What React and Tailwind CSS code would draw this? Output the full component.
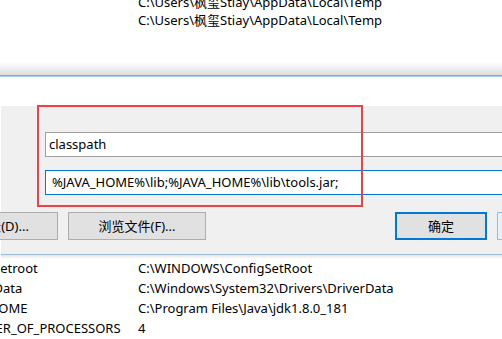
import React from 'react';

const tempPath = 'C:\\Users\\枫玺Stiay\\AppData\\Local\\Temp';

const envRows = [
  { name: 'configsetroot', value: 'C:\\WINDOWS\\ConfigSetRoot' },
  { name: 'DriverData', value: 'C:\\Windows\\System32\\Drivers\\DriverData' },
  { name: 'JAVA_HOME', value: 'C:\\Program Files\\Java\\jdk1.8.0_181' },
  { name: 'NUMBER_OF_PROCESSORS', value: '4' },
];

const App = () => {
  return (
    <div
      className="relative w-[502px] h-[339px] overflow-hidden bg-white text-[13px] text-black"
      style={{ fontFamily: '"Noto Sans", "Noto Sans CJK SC", sans-serif' }}
    >
      {/* list behind the dialog, top part */}
      <div className="flex h-[62px] flex-col overflow-hidden pl-[138px]">
        <div className="-mt-[7px] leading-[18px]">{tempPath}</div>
        <div className="leading-[18px]">{tempPath}</div>
      </div>

      {/* dialog shadow + border */}
      <div className="h-[13px] bg-gradient-to-b from-white to-[#dedede]" />
      <div className="h-px bg-[#6eaee6]" />
      <div className="h-px bg-[#a9d0f0]" />

      {/* dialog */}
      <div className="ml-px">
        <div className="h-[29px] bg-white" />
        <div className="bg-[#f0f0f0] pt-[26px] pb-[14px]">
          <div className="flex flex-col gap-[13px] pl-[44px]">
            <div className="h-[25px] w-[470px] border border-[#a0a0a0] bg-white pl-[3px] leading-[23px]">
              classpath
            </div>
            <div className="h-[25px] w-[470px] border border-[#0078d7] bg-white pl-[6px] leading-[23px]">
              %JAVA_HOME%\lib;%JAVA_HOME%\lib\tools.jar;
            </div>
          </div>

          <div className="mt-[17px] flex items-center whitespace-nowrap">
            <div className="-ml-[81px] h-[28px] w-[138px] shrink-0 border border-[#adadad] bg-[#e1e1e1] text-center leading-[26px]">
              浏览目录(D)...
            </div>
            <div className="ml-[10px] h-[28px] w-[138px] shrink-0 border border-[#adadad] bg-[#e1e1e1] text-center leading-[26px]">
              浏览文件(F)...
            </div>
            <div className="ml-[189px] h-[28px] w-[92px] shrink-0 border-2 border-[#0078d7] bg-[#e1e1e1] text-center leading-[24px]">
              确定
            </div>
            <div className="ml-[10px] h-[28px] w-[92px] shrink-0 border border-[#8cc0ea] bg-[#e5f1fb] text-center leading-[26px]">
              取消
            </div>
          </div>
        </div>
        <div className="h-px bg-[#9cbcd8]" />
        <div className="h-[4px] bg-gradient-to-b from-[#e4e4e4] to-white" />
      </div>

      {/* list behind the dialog, bottom part */}
      <div className="-ml-[44px]">
        {envRows.map((row) => (
          <div key={row.name} className="flex h-[20px] items-center whitespace-nowrap">
            <div className="w-[182px] shrink-0">{row.name}</div>
            <div>{row.value}</div>
          </div>
        ))}
      </div>

      {/* red annotation box */}
      <div className="absolute left-[37px] top-[105px] h-[102px] w-[326px] border-2 border-[#f04046]" />
    </div>
  );
};

export default App;
